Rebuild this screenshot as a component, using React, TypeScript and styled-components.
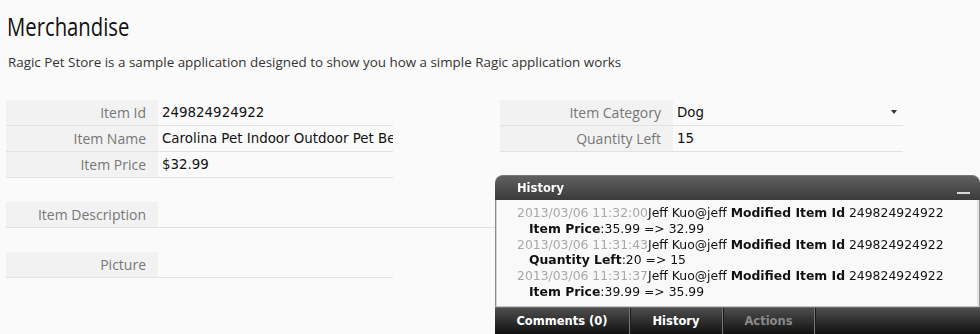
import React from "react";
import styled, { createGlobalStyle } from "styled-components";

const GlobalStyle = createGlobalStyle`
  html, body { margin: 0; padding: 0; background: #fafafa; }
  body { font-family: "Open Sans", "DejaVu Sans", sans-serif; color: #222; }
`;

const Page = styled.div`
  padding: 0 6px;
  min-height: 334px;
  box-sizing: border-box;
`;

const Title = styled.h1`
  margin: 10px 0 0 1px;
  font-family: "Open Sans", sans-serif;
  font-weight: 400;
  font-size: 26px;
  line-height: 32px;
  color: #111;
  display: inline-block;
  transform: scaleX(0.78);
  transform-origin: left center;
`;

const Subtitle = styled.p`
  margin: 11px 0 0 2px;
  font-family: "Open Sans", sans-serif;
  font-size: 13.4px;
  line-height: 19px;
  color: #333;
`;

const FormGrid = styled.div`
  margin-top: 28px;
  display: grid;
  grid-template-columns: 387px 403px;
  column-gap: 107px;
  row-gap: 24px;
  align-items: start;
`;

const Group = styled.div<{ $span?: boolean }>`
  display: flex;
  flex-direction: column;
  grid-column: ${(p) => (p.$span ? "1 / -1" : "auto")};
`;

const Row = styled.div<{ $labelWidth: number }>`
  display: grid;
  grid-template-columns: ${(p) => p.$labelWidth}px 1fr;
  height: 26px;
  box-sizing: border-box;
  border-bottom: 1px solid #e2e2e2;
`;

const Label = styled.div`
  background: #f2f2f2;
  display: flex;
  align-items: center;
  justify-content: flex-end;
  padding-right: 12px;
  font-family: "Open Sans", sans-serif;
  font-size: 14px;
  color: #777;
  white-space: nowrap;
`;

const Value = styled.div`
  display: flex;
  align-items: center;
  justify-content: space-between;
  padding: 0 6px 0 4px;
  font-family: "DejaVu Sans", sans-serif;
  font-size: 13.4px;
  color: #111;
  white-space: nowrap;
  overflow: hidden;
`;

const Caret = styled.svg`
  flex: none;
  width: 6px;
  height: 4px;
  margin-top: -2px;
`;

const Panel = styled.section`
  position: fixed;
  right: 0;
  bottom: 0;
  width: 485px;
  display: flex;
  flex-direction: column;
  z-index: 2;
  font-family: "DejaVu Sans", sans-serif;
`;

const PanelHeader = styled.header`
  height: 25px;
  box-sizing: border-box;
  border-radius: 8px 8px 0 0;
  background: linear-gradient(#606060, #3a3a3a);
  border-top: 1px solid #777;
  display: flex;
  align-items: center;
  justify-content: space-between;
  padding: 0 10px 0 22px;
  color: #fff;
  font-weight: 700;
  font-size: 11.5px;
`;

const MinimizeBar = styled.span`
  width: 13px;
  height: 2px;
  background: #d8d8d8;
  margin-top: 9px;
`;

const PanelBody = styled.div`
  height: 107px;
  box-sizing: border-box;
  background: #f9f9f9;
  border-left: 1px solid #8c8c8c;
  border-right: 1px solid #8c8c8c;
  border-bottom: 1px solid #c8c8c8;
  box-shadow: inset 1px 0 0 #d4d4d4, inset -2px 0 0 #e4e4e4;
  padding: 5px 0 0 21px;
  font-size: 12.4px;
  line-height: 15.8px;
  color: #111;
  overflow: hidden;
`;

const Entry = styled.div`
  white-space: nowrap;
`;

const Stamp = styled.span`
  color: #a8a8a8;
`;

const Detail = styled.div`
  padding-left: 12px;
  white-space: nowrap;
`;

const Footer = styled.nav`
  height: 27px;
  display: flex;
  background: linear-gradient(#4e4e4e, #101010);
  border-top: 1px solid #6a6a6a;
  box-sizing: border-box;
`;

const Tab = styled.div<{ $width: number; $muted?: boolean }>`
  width: ${(p) => p.$width}px;
  box-sizing: border-box;
  display: flex;
  align-items: center;
  justify-content: center;
  border-right: 1px solid #777;
  box-shadow: 1px 0 0 #1a1a1a;
  font-size: 11.5px;
  font-weight: 700;
  color: ${(p) => (p.$muted ? "#8a8a8a" : "#fff")};
`;

type Field = { label: string; value?: string; select?: boolean };

const leftFields: Field[] = [
  { label: "Item Id", value: "249824924922" },
  { label: "Item Name", value: "Carolina Pet Indoor Outdoor Pet Bed - Small" },
  { label: "Item Price", value: "$32.99" },
];

const rightFields: Field[] = [
  { label: "Item Category", value: "Dog", select: true },
  { label: "Quantity Left", value: "15" },
];

const history = [
  { time: "2013/03/06 11:32:00", field: "Item Price", change: "35.99 => 32.99" },
  { time: "2013/03/06 11:31:43", field: "Quantity Left", change: "20 => 15" },
  { time: "2013/03/06 11:31:37", field: "Item Price", change: "39.99 => 35.99" },
];

function FieldRow({ f, labelWidth }: { f: Field; labelWidth: number }) {
  return (
    <Row $labelWidth={labelWidth}>
      <Label>{f.label}</Label>
      <Value>
        <span>{f.value}</span>
        {f.select && (
          <Caret viewBox="0 0 6 4">
            <path d="M0 0h6L3 4z" fill="#333" />
          </Caret>
        )}
      </Value>
    </Row>
  );
}

export default function App() {
  return (
    <>
      <GlobalStyle />
      <Page>
        <Title>Merchandise</Title>
        <Subtitle>
          Ragic Pet Store is a sample application designed to show you how a simple Ragic application works
        </Subtitle>
        <FormGrid>
          <Group>
            {leftFields.map((f) => (
              <FieldRow key={f.label} f={f} labelWidth={152} />
            ))}
          </Group>
          <Group>
            {rightFields.map((f) => (
              <FieldRow key={f.label} f={f} labelWidth={173} />
            ))}
          </Group>
          <Group $span>
            <FieldRow f={{ label: "Item Description" }} labelWidth={152} />
          </Group>
          <Group>
            <FieldRow f={{ label: "Picture" }} labelWidth={152} />
          </Group>
        </FormGrid>
      </Page>
      <Panel>
        <PanelHeader>
          <span>History</span>
          <MinimizeBar />
        </PanelHeader>
        <PanelBody>
          {history.map((h) => (
            <React.Fragment key={h.time}>
              <Entry>
                <Stamp>{h.time}</Stamp>Jeff Kuo@jeff <b>Modified Item Id</b> 249824924922
              </Entry>
              <Detail>
                <b>{h.field}</b>:{h.change}
              </Detail>
            </React.Fragment>
          ))}
        </PanelBody>
        <Footer>
          <Tab $width={135}>Comments (0)</Tab>
          <Tab $width={93}>History</Tab>
          <Tab $width={92} $muted>
            Actions
          </Tab>
        </Footer>
      </Panel>
    </>
  );
}
